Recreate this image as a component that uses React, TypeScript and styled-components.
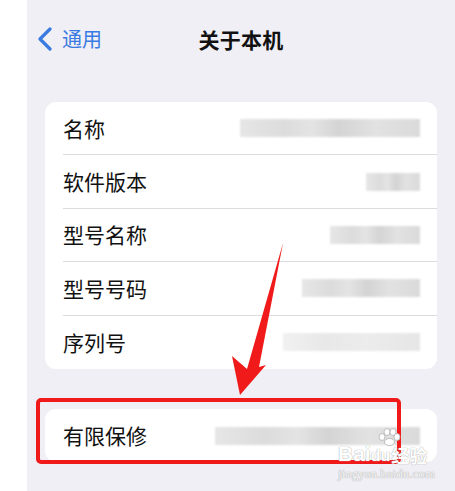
import React from 'react'
import styled, { createGlobalStyle } from 'styled-components'

const GlobalStyle = createGlobalStyle`
  html, body {
    margin: 0;
    padding: 0;
    background: #ffffff;
  }
  body {
    font-family: "Noto Sans CJK SC", "Noto Sans", sans-serif;
  }
`

const Screen = styled.div`
  position: relative;
  width: 455px;
  height: 491px;
  display: flex;
  overflow: hidden;
`

const Gutter = styled.div`
  width: 27px;
  background: #ffffff;
`

const Main = styled.div`
  flex: 1;
  background: #f0eff5;
  display: flex;
  flex-direction: column;
  padding: 0 18px;
`

const NavBar = styled.div`
  height: 78px;
  display: grid;
  grid-template-columns: 1fr auto 1fr;
  align-items: center;
  box-sizing: border-box;
`

const Back = styled.div`
  display: flex;
  align-items: center;
  gap: 9px;
  margin-left: -8px;
  color: #3a7be2;
  font-size: 20px;
  line-height: 1;
`

const Title = styled.div`
  font-size: 21px;
  font-weight: 700;
  color: #111;
  letter-spacing: 0.2px;
`

const Card = styled.div<{ $mt: number }>`
  margin-top: ${p => p.$mt}px;
  background: #ffffff;
  border-radius: 11px;
  display: flex;
  flex-direction: column;
`

const Row = styled.div<{ $last?: boolean }>`
  height: 53.4px;
  margin-left: 18px;
  padding-right: 17px;
  display: flex;
  align-items: center;
  justify-content: space-between;
  box-sizing: border-box;
  border-bottom: ${p => (p.$last ? 'none' : '1px solid #dcdce0')};
`

const Label = styled.span`
  font-size: 21px;
  color: #111;
  line-height: 1;
`

const Blur = styled.div<{ $w: number; $light?: boolean }>`
  width: ${p => p.$w}px;
  height: 18px;
  filter: blur(1.2px);
  background: ${p =>
    p.$light
      ? 'linear-gradient(90deg, #f1f1f1 0%, #e8e8e8 30%, #ececec 60%, #e6e6e6 100%)'
      : 'linear-gradient(90deg, #e6e6e6 0%, #dcdcdc 25%, #e4e4e4 40%, #d4d4d4 55%, #e2e2e2 75%, #dadada 100%)'};
`

const RedBox = styled.div`
  position: absolute;
  left: 36px;
  top: 398px;
  width: 365px;
  height: 66px;
  box-sizing: border-box;
  border: 4px solid #f01a1a;
  border-radius: 5px;
  pointer-events: none;
`

const ArrowSvg = styled.svg`
  position: absolute;
  left: 0;
  top: 0;
  pointer-events: none;
`

const Watermark = styled.div`
  position: absolute;
  left: 338px;
  top: 428px;
  display: flex;
  flex-direction: column;
  align-items: flex-start;
  color: #ffffff;
  font-family: "Liberation Sans", sans-serif;
  text-shadow: 0 0 1px #b0b0b0, 0 0 1px #b0b0b0;
  pointer-events: none;
`

const MarkLine = styled.div`
  display: flex;
  align-items: flex-end;
  font-size: 21px;
  font-weight: 700;
  line-height: 1;
`

const MarkSmall = styled.span`
  font-size: 16px;
`

const MarkCn = styled.span`
  font-family: "Noto Sans CJK SC", sans-serif;
  font-size: 18px;
  margin-left: 1px;
`

const MarkUrl = styled.div`
  font-family: "Liberation Serif", serif;
  font-size: 13px;
  margin-top: 2px;
  color: #f4f4f4;
`

const rows: { label: string; w: number; light?: boolean }[] = [
  { label: '名称', w: 180 },
  { label: '软件版本', w: 54 },
  { label: '型号名称', w: 90 },
  { label: '型号号码', w: 118 },
  { label: '序列号', w: 137, light: true },
]

export default function App() {
  return (
    <>
      <GlobalStyle />
      <Screen>
        <Gutter />
        <Main>
          <NavBar>
            <Back>
              <svg width="16" height="24" viewBox="0 0 16 24">
                <path d="M13 2 L3 12 L13 22" fill="none" stroke="#3a7be2" strokeWidth="3.2" strokeLinecap="round" strokeLinejoin="round" />
              </svg>
              <span>通用</span>
            </Back>
            <Title>关于本机</Title>
            <div />
          </NavBar>
          <Card $mt={24}>
            {rows.map((r, i) => (
              <Row key={r.label} $last={i === rows.length - 1}>
                <Label>{r.label}</Label>
                <Blur $w={r.w} $light={r.light} />
              </Row>
            ))}
          </Card>
          <Card $mt={40}>
            <Row $last>
              <Label>有限保修</Label>
              <Blur $w={205} />
            </Row>
          </Card>
        </Main>
        <ArrowSvg width="455" height="491" viewBox="0 0 455 491">
          <polygon points="283,243 259,367 266,365 240,395 232,356 247,369" fill="#f01a1a" />
        </ArrowSvg>
        <RedBox />
        <Watermark>
          <svg width="26" height="18" viewBox="0 0 26 18" style={{ marginLeft: 38, marginBottom: -3 }}>
            <g fill="#fff" stroke="#b0b0b0" strokeWidth="0.8">
              <ellipse cx="6" cy="9" rx="3" ry="3.5" />
              <ellipse cx="11" cy="4" rx="3" ry="3.5" />
              <ellipse cx="17" cy="4" rx="3" ry="3.5" />
              <ellipse cx="21" cy="9" rx="3" ry="3.5" />
              <ellipse cx="13.5" cy="14" rx="5" ry="3.5" />
            </g>
          </svg>
          <MarkLine>
            Bai<MarkSmall>du</MarkSmall>
            <MarkCn>经验</MarkCn>
          </MarkLine>
          <MarkUrl>jingyan.baidu.com</MarkUrl>
        </Watermark>
      </Screen>
    </>
  )
}
